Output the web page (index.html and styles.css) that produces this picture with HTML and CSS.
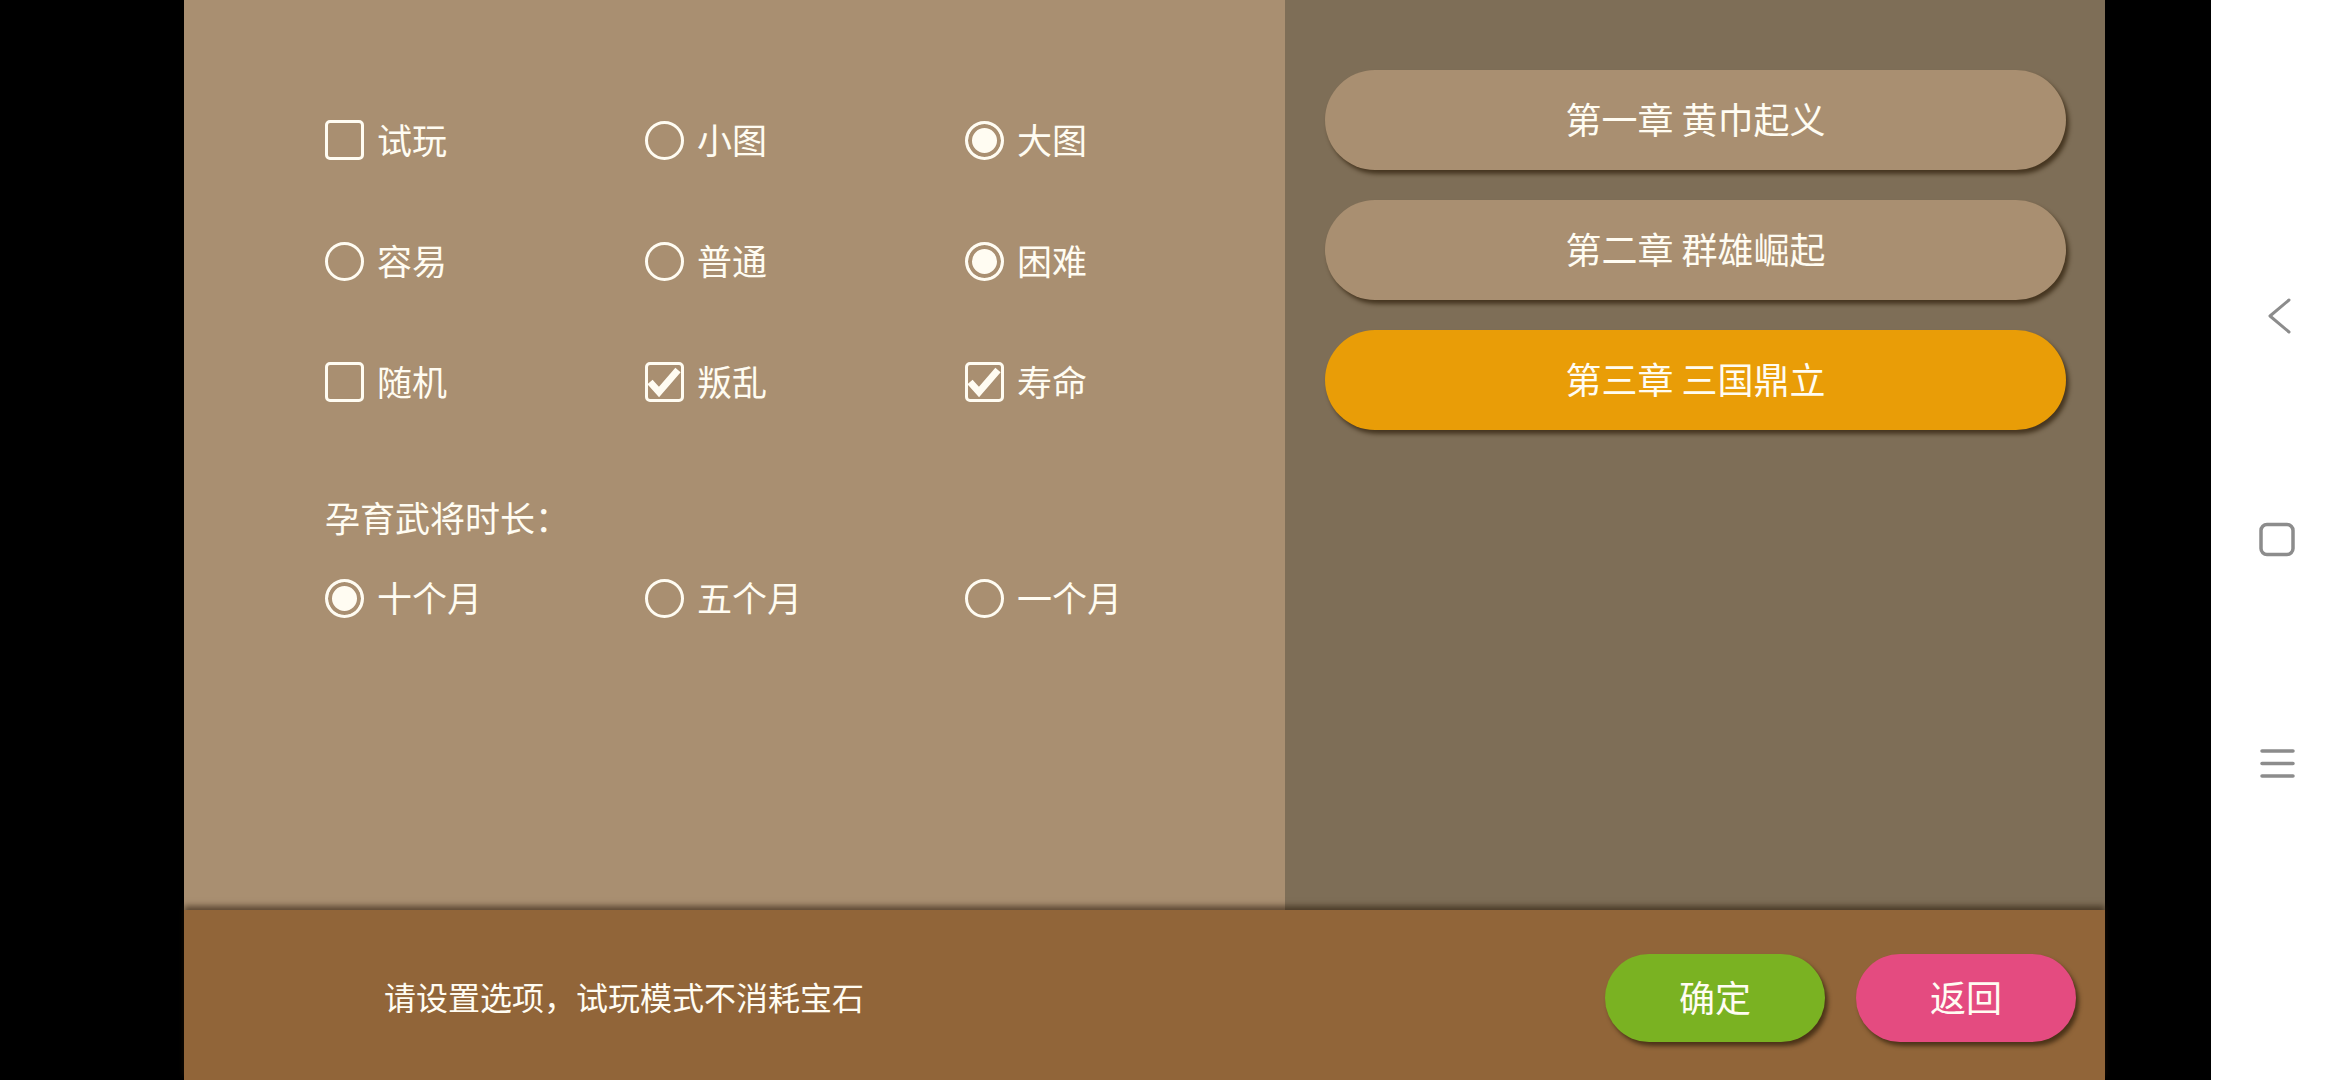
FILE: index.html
```html
<!DOCTYPE html>
<html lang="zh-CN">
<head>
<meta charset="utf-8">
<title>设置</title>
<link rel="stylesheet" href="styles.css">
</head>
<body>
<div class="screen">
  <div class="main">
    <section class="options">
      <div class="grid">
        <div class="opt"><span class="box"></span><span class="lbl">试玩</span></div>
        <div class="opt"><span class="radio"></span><span class="lbl">小图</span></div>
        <div class="opt"><span class="radio on"></span><span class="lbl">大图</span></div>
        <div class="opt"><span class="radio"></span><span class="lbl">容易</span></div>
        <div class="opt"><span class="radio"></span><span class="lbl">普通</span></div>
        <div class="opt"><span class="radio on"></span><span class="lbl">困难</span></div>
        <div class="opt"><span class="box"></span><span class="lbl">随机</span></div>
        <div class="opt"><span class="box on"><svg viewBox="0 0 40 40" width="40" height="40"><polyline points="5,20 14,30 33,8" fill="none" stroke="#fffcf2" stroke-width="7"/></svg></span><span class="lbl">叛乱</span></div>
        <div class="opt"><span class="box on"><svg viewBox="0 0 40 40" width="40" height="40"><polyline points="5,20 14,30 33,8" fill="none" stroke="#fffcf2" stroke-width="7"/></svg></span><span class="lbl">寿命</span></div>
      </div>
      <div class="heading">孕育武将时长：</div>
      <div class="grid single">
        <div class="opt"><span class="radio on"></span><span class="lbl">十个月</span></div>
        <div class="opt"><span class="radio"></span><span class="lbl">五个月</span></div>
        <div class="opt"><span class="radio"></span><span class="lbl">一个月</span></div>
      </div>
    </section>
    <section class="chapters">
      <div class="chapter">第一章 黄巾起义</div>
      <div class="chapter">第二章 群雄崛起</div>
      <div class="chapter active">第三章 三国鼎立</div>
    </section>
  </div>
  <div class="bar">
    <div class="hint">请设置选项，试玩模式不消耗宝石</div>
    <div class="actions">
      <div class="btn ok">确定</div>
      <div class="btn back">返回</div>
    </div>
  </div>
</div>
<nav class="nav">
  <svg class="ico" viewBox="0 0 40 40" width="40" height="40"><path d="M32 4 L13 20 L32 36" fill="none" stroke="#8c8c8c" stroke-width="3" stroke-linecap="round" stroke-linejoin="round"/></svg>
  <svg class="ico" viewBox="0 0 40 40" width="40" height="40"><rect x="4" y="4.5" width="32" height="30" rx="6" fill="none" stroke="#8c8c8c" stroke-width="3.5"/></svg>
  <svg class="ico" viewBox="0 0 40 40" width="40" height="40"><path d="M5 7 H36 M5 19.5 H36 M5 32 H36" fill="none" stroke="#8c8c8c" stroke-width="3.5" stroke-linecap="round"/></svg>
</nav>
</body>
</html>
```

FILE: styles.css
```css
* { box-sizing: border-box; }

html, body {
  margin: 0;
  padding: 0;
}

body {
  width: 2340px;
  height: 1080px;
  overflow: hidden;
  background: #000;
  display: flex;
  font-family: "Noto Sans CJK SC", "Noto Sans", sans-serif;
  color: #fffcf2;
}

.screen {
  margin-left: 184px;
  width: 1921px;
  flex: none;
  height: 1080px;
  display: flex;
  flex-direction: column;
}

.main {
  height: 910px;
  display: flex;
}

.options {
  width: 1101px;
  background: #a98f71;
  padding: 120px 0 0 141px;
}

.grid {
  display: grid;
  grid-template-columns: repeat(3, 320px);
  grid-auto-rows: 40px;
  row-gap: 81px;
}

.opt {
  display: flex;
  align-items: center;
  gap: 13px;
  height: 40px;
}

.lbl {
  font-size: 35px;
  line-height: 40px;
  padding-bottom: 3px;
  white-space: nowrap;
}

.box {
  width: 39px;
  height: 40px;
  border: 3px solid #fffcf2;
  border-radius: 5px;
  flex: none;
  position: relative;
  overflow: visible;
}

.box svg {
  position: absolute;
  left: -3px;
  top: -3px;
}

.radio {
  width: 39px;
  height: 39px;
  border: 3px solid #fffcf2;
  border-radius: 50%;
  flex: none;
}

.radio.on {
  background: #fffcf2;
  box-shadow: inset 0 0 0 4px #a98f71;
}

.heading {
  margin-top: 95px;
  font-size: 35px;
  line-height: 40px;
  height: 40px;
  padding-bottom: 3px;
}

.single {
  margin-top: 41px;
}

.chapters {
  flex: 1;
  background: #7e6e57;
  padding: 70px 39px 0 40px;
  display: flex;
  flex-direction: column;
  gap: 30px;
}

.chapter {
  height: 100px;
  border-radius: 50px;
  background: #a98f71;
  display: flex;
  align-items: center;
  justify-content: center;
  font-size: 36px;
  padding-bottom: 5px;
  box-shadow: 3px 4px 4px rgba(45, 30, 10, 0.7);
}

.chapter.active {
  background: #e99d07;
}

.bar {
  position: relative;
  height: 170px;
  background: #916539;
  box-shadow: 0 -4px 6px rgba(40, 25, 10, 0.6);
  display: flex;
  align-items: center;
  justify-content: space-between;
  padding: 5px 29px 0 200px;
}

.hint {
  font-size: 32px;
  line-height: 40px;
  padding-bottom: 3px;
}

.actions {
  display: flex;
  gap: 31px;
}

.btn {
  width: 220px;
  height: 88px;
  border-radius: 44px;
  display: flex;
  align-items: center;
  justify-content: center;
  font-size: 36px;
  padding-bottom: 3px;
  box-shadow: 3px 4px 4px rgba(45, 30, 10, 0.7);
}

.btn.ok { background: #7ab222; }
.btn.back { background: #e44b80; }

.nav {
  margin-left: 106px;
  width: 129px;
  flex: none;
  height: 1080px;
  background: #fff;
  display: flex;
  flex-direction: column;
  align-items: flex-start;
  padding: 296px 0 0 46px;
  gap: 184px;
}

.ico {
  display: block;
  flex: none;
}
```
